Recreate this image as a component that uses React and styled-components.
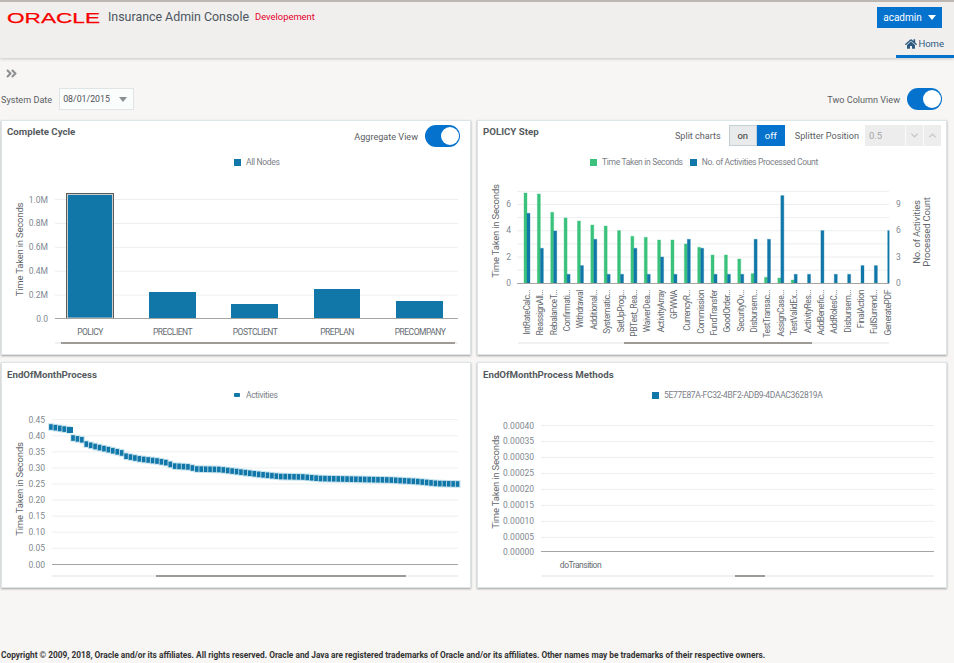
import React from "react";
import styled, { createGlobalStyle } from "styled-components";
import { FaHome, FaAngleDoubleRight } from "react-icons/fa";
import { ChevronUp, ChevronDown } from "lucide-react";

const GlobalStyle = createGlobalStyle`
  html, body {
    margin: 0;
    padding: 0;
    height: 100%;
    overflow: hidden;
    background: #f7f6f4;
    font-family: Roboto, "Open Sans", sans-serif;
    color: #55595c;
  }
`;

const cycleBars = [
  { name: "PRECLIENT", x: 149, w: 47, top: 292, labelX: 172.5 },
  { name: "POSTCLIENT", x: 231, w: 47, top: 304, labelX: 255 },
  { name: "PREPLAN", x: 314, w: 46, top: 289, labelX: 337 },
  { name: "PRECOMPANY", x: 396, w: 47, top: 301, labelX: 420 },
];

// green / blue are the tops of the bars in page pixels, null when no bar
const stepBars = [
  ["IntRateCalc...", 193, 213.3],
  ["ReassignAll...", 194, 248.3],
  ["RebalanceT...", 212.3, 231],
  ["Confirmati...", 218, 274.3],
  ["Withdrawal", 221, 265.6],
  ["Additional...", 225, 239.3],
  ["Systematic...", 226, 274.3],
  ["SetUpProg...", 230.6, 274.3],
  ["PBTest_Rea...", 236.3, 248.3],
  ["WaiverDea...", 237.3, 274.3],
  ["ActivityArray", 240, 257],
  ["GFWWA", 240, 274.3],
  ["CurrencyR...", 244, 239.3],
  ["Commission", 247.3, 248.3],
  ["FundTransfer", 255, 274.3],
  ["GoodOrder...", 255, 274.3],
  ["SecurityOv...", 259, 274.3],
  ["Disbursem...", 273.6, 239.3],
  ["TestTransac...", 277.3, 239.3],
  ["AssignCase...", 278, 195.6],
  ["TestValidEx...", 280, 274.3],
  ["ActivityRes...", null, 274.3],
  ["AddBenefic...", null, 230.6],
  ["AddRolesC...", null, 274.3],
  ["Disbursem...", null, 274.3],
  ["FinalAction", null, 265.6],
  ["FullSurrend...", null, 265.6],
  ["GeneratePDF", null, 230.6],
];

// x, y of the scatter curve in page pixels, interpolated below
const curve = [
  [51, 427], [70, 430], [73, 438], [83, 440], [86, 444], [97, 447], [110, 450],
  [122, 453], [125, 456], [140, 459], [157, 461], [168, 463], [173, 466], [190, 467],
  [195, 469], [220, 469.5], [240, 472], [260, 474.5], [280, 476.5], [303, 477],
  [320, 478.5], [367, 479.5], [390, 480], [417, 481.5], [437, 483.5], [458, 484],
];

const curveY = (x) => {
  for (let i = 1; i < curve.length; i++) {
    if (x <= curve[i][0]) {
      const [x0, y0] = curve[i - 1];
      const [x1, y1] = curve[i];
      return y0 + ((y1 - y0) * (x - x0)) / (x1 - x0);
    }
  }
  return curve[curve.length - 1][1];
};

const scatterPoints = Array(93)
  .fill()
  .map((_, index) => 51 + index * 4.42)
  .map((x) => ({ x, y: curveY(x) }));

const App = () => {
  return (
    <>
      <GlobalStyle />
      <Page>
        <Header>
          <HeaderTop>
            <Logo viewBox="0 0 96 16" aria-label="Oracle">
              <LogoText x="0" y="13.5" textLength="93" lengthAdjust="spacingAndGlyphs">
                ORACLE
              </LogoText>
            </Logo>
            <AppTitle>Insurance Admin Console</AppTitle>
            <EnvName>Developement</EnvName>
            <UserButton>
              acadmin <Caret $color="#fff" />
            </UserButton>
          </HeaderTop>
          <Tabs>
            <Tab>
              <FaHome size={12} /> Home
            </Tab>
          </Tabs>
        </Header>

        <DrawerRow>
          <FaAngleDoubleRight size={13} />
        </DrawerRow>

        <FilterRow>
          <FieldGroup>
            <FieldLabel>System Date</FieldLabel>
            <DateSelect>
              08/01/2015 <Caret $color="#8a8f92" />
            </DateSelect>
          </FieldGroup>
          <FieldGroup>
            <FieldLabel>Two Column View</FieldLabel>
            <Toggle />
          </FieldGroup>
        </FilterRow>

        <Dashboard>
          <Card $height={235}>
            <CardHead>
              <CardTitle>Complete Cycle</CardTitle>
              <HeadControls $mr={5}>
                <FieldLabel>Aggregate View</FieldLabel>
                <Toggle />
              </HeadControls>
            </CardHead>
            <Legend $left={232}>
              <LegendItem>
                <LegendSwatch $color="#1177a9" />
                All Nodes
              </LegendItem>
            </Legend>
            <ChartSvg viewBox="2 174 468 180">
              <YTitle transform="translate(23 249.5) rotate(-90)">Time Taken in Seconds</YTitle>
              {["1.0M", "0.8M", "0.6M", "0.4M", "0.2M"].map((label, index) => (
                <g key={label}>
                  <GridLine x1="55" x2="458" y1={199.5 + index * 23.9} y2={199.5 + index * 23.9} />
                  <Tick x="48" y={202.5 + index * 23.9}>{label}</Tick>
                </g>
              ))}
              <Tick x="48" y="321.5">0.0</Tick>
              <rect x="66" y="193" width="48" height="125.5" fill="#5c5c5c" />
              <rect x="67" y="194" width="46" height="124.5" fill="#c9cdcf" />
              <rect x="68" y="195" width="44" height="122.5" fill="#1177a9" />
              {cycleBars.map((bar) => (
                <rect key={bar.name} x={bar.x} y={bar.top} width={bar.w} height={318.5 - bar.top} fill="#1177a9" />
              ))}
              <AxisLine x1="55" x2="458" y1="318.5" y2="318.5" />
              <Category x="90" y="335">POLICY</Category>
              {cycleBars.map((bar) => (
                <Category key={bar.name} x={bar.labelX} y="335">{bar.name}</Category>
              ))}
              <ScrollTrack x="55" y="342" width="403" height="2" />
              <ScrollThumb x="61" y="342" width="394" height="2" />
            </ChartSvg>
          </Card>

          <Card $height={235}>
            <CardHead>
              <CardTitle>POLICY Step</CardTitle>
              <HeadControls $mr={0}>
                <FieldLabel>Split charts</FieldLabel>
                <Segment>
                  <SegmentButton>on</SegmentButton>
                  <SegmentButton $active>off</SegmentButton>
                </Segment>
                <SplitterLabel>Splitter Position</SplitterLabel>
                <Spinner>
                  <SpinnerValue>0.5</SpinnerValue>
                  <SpinnerButton><ChevronDown size={11} strokeWidth={3} /></SpinnerButton>
                  <SpinnerButton><ChevronUp size={11} strokeWidth={3} /></SpinnerButton>
                </Spinner>
              </HeadControls>
            </CardHead>
            <Legend $left={112}>
              <LegendItem>
                <LegendSwatch $color="#3ac27c" />
                Time Taken in Seconds
              </LegendItem>
              <LegendItem>
                <LegendSwatch $color="#1177a9" />
                No. of Activities Processed Count
              </LegendItem>
            </Legend>
            <ChartSvg viewBox="478 174 468 180">
              <YTitle transform="translate(498.5 231) rotate(-90)">Time Taken in Seconds</YTitle>
              <YTitle transform="translate(920 232) rotate(-90)">No. of Activities</YTitle>
              <YTitle transform="translate(929.5 232) rotate(-90)">Processed Count</YTitle>
              {[0, 1, 2, 3, 4, 5, 6, 7].map((step) => (
                <GridLine key={step} x1="517" x2="889" y1={191.3 + step * 13.15} y2={191.3 + step * 13.15} />
              ))}
              {[6, 4, 2, 0].map((value) => (
                <Tick key={value} x="511" y={286 - value * 13.25}>{value}</Tick>
              ))}
              {[9, 6, 3, 0].map((value) => (
                <RightTick key={value} x="896" y={286 - value * 8.83}>{value}</RightTick>
              ))}
              {stepBars.map(([name, green, blue], index) => {
                const center = 527 + index * 13.36;
                return (
                  <g key={index}>
                    {green !== null && (
                      <GreenBar x={center - 3} y={green} width="3" height={283.3 - green} />
                    )}
                    <BlueBar
                      x={center}
                      y={blue}
                      width={index === 27 ? 1.5 : 3}
                      height={283.3 - blue}
                    />
                    <StepLabel transform={`translate(${center + 3} 290) rotate(-90)`}>{name}</StepLabel>
                  </g>
                );
              })}
              <AxisLine x1="517" x2="889" y1="283.5" y2="283.5" />
              <ScrollTrack x="518" y="342" width="371" height="2" />
              <ScrollThumb x="624" y="342" width="188" height="2" />
            </ChartSvg>
          </Card>

          <Card $height={226}>
            <CardHead $short>
              <CardTitle>EndOfMonthProcess</CardTitle>
            </CardHead>
            <Legend $left={232}>
              <LegendItem>
                <LegendDot />
                Activities
              </LegendItem>
            </Legend>
            <ChartSvg viewBox="2 407 468 180">
              <YTitle transform="translate(23 489) rotate(-90)">Time Taken in Seconds</YTitle>
              {["0.45", "0.40", "0.35", "0.30", "0.25", "0.20", "0.15", "0.10", "0.05"].map((label, index) => (
                <g key={label}>
                  <GridLine x1="52" x2="458" y1={419.7 + index * 16.07} y2={419.7 + index * 16.07} />
                  <Tick x="45" y={422.7 + index * 16.07}>{label}</Tick>
                </g>
              ))}
              <Tick x="45" y="567.5">0.00</Tick>
              <AxisLine x1="52" x2="458" y1="564.5" y2="564.5" />
              {scatterPoints.map((point) => (
                <ScatterHalo key={point.x} x={point.x - 2.8} y={point.y - 3.8} width="5.6" height="7.6" />
              ))}
              {scatterPoints.map((point) => (
                <ScatterPoint key={point.x} x={point.x - 1.9} y={point.y - 2.8} width="3.6" height="5.6" />
              ))}
              <ScatterPoint x="67" y="427" width="6" height="6" />
              <ScrollTrack x="52" y="575" width="406" height="2" />
              <ScrollThumb x="156" y="575" width="250" height="2" />
            </ChartSvg>
          </Card>

          <Card $height={226}>
            <CardHead $short>
              <CardTitle>EndOfMonthProcess Methods</CardTitle>
            </CardHead>
            <Legend $left={174}>
              <LegendItem>
                <LegendSwatch $color="#1177a9" />
                5E77E87A-FC32-4BF2-ADB9-4DAAC362819A
              </LegendItem>
            </Legend>
            <ChartSvg viewBox="478 407 468 180">
              <YTitle transform="translate(498.5 482) rotate(-90)">Time Taken in Seconds</YTitle>
              {["0.00040", "0.00035", "0.00030", "0.00025", "0.00020", "0.00015", "0.00010", "0.00005"].map(
                (label, index) => (
                  <g key={label}>
                    <GridLine x1="541" x2="934" y1={425.5 + index * 15.97} y2={425.5 + index * 15.97} />
                    <Tick x="534" y={428.5 + index * 15.97}>{label}</Tick>
                  </g>
                )
              )}
              <Tick x="534" y="554.5">0.00000</Tick>
              <AxisLine x1="541" x2="934" y1="551.5" y2="551.5" />
              <Category x="580.5" y="568">doTransition</Category>
              <ScrollTrack x="541" y="575" width="393" height="2" />
              <ScrollThumb x="735" y="575" width="30" height="2" />
            </ChartSvg>
          </Card>
        </Dashboard>

        <Footer>
          Copyright © 2009, 2018, Oracle and/or its affiliates. All rights reserved. Oracle and Java are registered
          trademarks of Oracle and/or its affiliates. Other names may be trademarks of their respective owners.
        </Footer>
      </Page>
    </>
  );
};

const Page = styled.div`
  display: flex;
  flex-direction: column;
  height: 663px;
  width: 954px;
`;

const Header = styled.header`
  display: flex;
  flex-direction: column;
  justify-content: space-between;
  box-sizing: border-box;
  height: 58px;
  border-top: 2px solid #bdb7b4;
  background: #f0efee;
  box-shadow: 0 1px 3px rgba(0, 0, 0, 0.2);
`;

const HeaderTop = styled.div`
  display: flex;
  align-items: flex-start;
  padding: 5px 12px 0 7px;
`;

const Logo = styled.svg`
  width: 96px;
  height: 16px;
  margin-top: 2px;
  flex-shrink: 0;
`;

const LogoText = styled.text`
  font-family: "Liberation Sans", sans-serif;
  font-size: 15.5px;
  font-weight: 400;
  fill: #f80000;
  stroke: #f80000;
  stroke-width: 0.25px;
`;

const AppTitle = styled.div`
  margin: 1px 0 0 5px;
  font-size: 12.4px;
  line-height: 18px;
  color: #4c5660;
`;

const EnvName = styled.div`
  margin: 2px 0 0 6px;
  font-size: 9.4px;
  line-height: 16px;
  color: #e6002b;
`;

const UserButton = styled.div`
  display: flex;
  align-items: center;
  justify-content: center;
  gap: 6px;
  margin-left: auto;
  margin-top: 0;
  width: 65px;
  height: 21px;
  background: #0572ce;
  color: #fff;
  font-size: 10px;
`;

const Caret = styled.span`
  display: inline-block;
  width: 0;
  height: 0;
  border-left: 4px solid transparent;
  border-right: 4px solid transparent;
  border-top: 5px solid ${(props) => props.$color};
`;

const Tabs = styled.nav`
  display: flex;
  justify-content: flex-end;
`;

const Tab = styled.div`
  display: flex;
  align-items: center;
  justify-content: flex-end;
  gap: 1px;
  box-sizing: border-box;
  width: 58px;
  height: 24px;
  padding: 0 10px 2px 0;
  border-bottom: 3px solid #0572ce;
  color: #2c5a80;
  font-size: 9.5px;
`;

const DrawerRow = styled.div`
  display: flex;
  align-items: center;
  height: 13px;
  padding: 9px 0 0 5px;
  color: #8d9091;
`;

const FilterRow = styled.div`
  display: flex;
  justify-content: space-between;
  align-items: center;
  height: 22px;
  margin-top: 8px;
  padding: 0 12px 0 1px;
`;

const FieldGroup = styled.div`
  display: flex;
  align-items: center;
  gap: 7px;
`;

const FieldLabel = styled.span`
  padding-top: 1px;
  font-size: 9.1px;
  color: #5b6064;
  white-space: nowrap;
`;

const DateSelect = styled.div`
  display: flex;
  align-items: center;
  justify-content: space-between;
  box-sizing: border-box;
  width: 75px;
  height: 22px;
  padding: 0 6px 0 3px;
  border: 1px solid #dfe4e5;
  background: #fbfcfc;
  font-size: 8.8px;
  color: #4c5157;
`;

const Toggle = styled.div`
  position: relative;
  width: 35px;
  height: 22px;
  border-radius: 11px;
  background: #0572ce;

  &::after {
    content: "";
    position: absolute;
    top: 2px;
    right: 1px;
    width: 18px;
    height: 18px;
    border-radius: 50%;
    background: #fff;
  }
`;

const Dashboard = styled.main`
  display: grid;
  grid-template-columns: 470px 470px;
  column-gap: 6px;
  row-gap: 7px;
  margin-top: 10px;
  padding-left: 1px;
`;

const Card = styled.section`
  display: flex;
  flex-direction: column;
  box-sizing: border-box;
  height: ${(props) => props.$height}px;
  border: 1px solid #dde5e8;
  background: #fff;
  box-shadow: 0 1px 2px rgba(0, 0, 0, 0.35);
`;

const CardHead = styled.div`
  display: flex;
  justify-content: space-between;
  align-items: flex-start;
  box-sizing: border-box;
  height: ${(props) => (props.$short ? 20 : 29)}px;
  padding: ${(props) => (props.$short ? 4 : 3)}px 5px 0 5px;
`;

const CardTitle = styled.h2`
  margin: 0;
  font-size: 9.7px;
  line-height: 15px;
  font-weight: 700;
  color: #555a5e;
`;

const HeadControls = styled.div`
  display: flex;
  align-items: center;
  gap: 7px;
  margin-top: 1px;
  margin-right: ${(props) => props.$mr}px;
`;

const Segment = styled.div`
  display: flex;
  margin-left: 1px;
`;

const SegmentButton = styled.div`
  display: flex;
  align-items: center;
  justify-content: center;
  box-sizing: border-box;
  width: 28px;
  height: 21px;
  font-size: 9.5px;
  color: ${(props) => (props.$active ? "#fff" : "#333")};
  background: ${(props) => (props.$active ? "#0572ce" : "#e9eaeb")};
  border: 1px solid ${(props) => (props.$active ? "#0572ce" : "#c4ced3")};
`;

const SplitterLabel = styled(FieldLabel)`
  margin: 0 -1px 0 3px;
`;

const Spinner = styled.div`
  display: flex;
  height: 21px;
  background: #eeeded;
`;

const SpinnerValue = styled.div`
  width: 40px;
  padding-left: 4px;
  box-sizing: border-box;
  line-height: 21px;
  font-size: 9.5px;
  color: #a3a5a6;
`;

const SpinnerButton = styled.div`
  display: flex;
  align-items: center;
  justify-content: center;
  width: 17px;
  border-left: 1px solid #fafafa;
  color: #c2c4c5;
`;

const Legend = styled.div`
  display: flex;
  align-items: center;
  gap: 7px;
  height: 24px;
  padding-left: ${(props) => props.$left}px;
`;

const LegendItem = styled.div`
  display: flex;
  align-items: center;
  gap: 5px;
  font-size: 8.5px;
  letter-spacing: -0.32px;
  color: #7b8087;
`;

const LegendSwatch = styled.span`
  width: 7px;
  height: 7px;
  background: ${(props) => props.$color};
`;

const LegendDot = styled.span`
  width: 6px;
  height: 4px;
  border-radius: 1px;
  margin-right: 1px;
  background: #1177a9;
`;

const ChartSvg = styled.svg`
  display: block;
  width: 468px;
  height: 180px;
  font-family: Roboto, "Open Sans", sans-serif;
`;

const GridLine = styled.line`
  stroke: #eceeef;
  stroke-width: 1;
`;

const AxisLine = styled.line`
  stroke: #a7a5a2;
  stroke-width: 1;
`;

const Tick = styled.text`
  font-size: 8.5px;
  fill: #808890;
  text-anchor: end;
`;

const RightTick = styled(Tick)`
  text-anchor: start;
`;

const YTitle = styled.text`
  font-size: 9.5px;
  letter-spacing: -0.2px;
  fill: #62666a;
  text-anchor: middle;
`;

const Category = styled.text`
  font-size: 8.5px;
  letter-spacing: -0.5px;
  fill: #666b72;
  text-anchor: middle;
`;

const StepLabel = styled.text`
  font-size: 8.5px;
  letter-spacing: -0.4px;
  fill: #62676d;
  text-anchor: end;
`;

const GreenBar = styled.rect`
  fill: #3ac27c;
  stroke: rgba(58, 194, 124, 0.35);
  stroke-width: 1;
`;

const BlueBar = styled.rect`
  fill: #1177a9;
  stroke: rgba(17, 119, 169, 0.35);
  stroke-width: 1;
`;

const ScatterHalo = styled.rect`
  fill: #c6e3ee;
`;

const ScatterPoint = styled.rect`
  fill: #1177a9;
`;

const ScrollTrack = styled.rect`
  fill: #f1f1f1;
`;

const ScrollThumb = styled.rect`
  fill: #9e9a96;
`;

const Footer = styled.footer`
  margin-top: auto;
  padding: 0 0 1px 1px;
  font-size: 8.33px;
  line-height: 13px;
  font-weight: 700;
  color: #333;
  white-space: nowrap;
`;

export default App;
